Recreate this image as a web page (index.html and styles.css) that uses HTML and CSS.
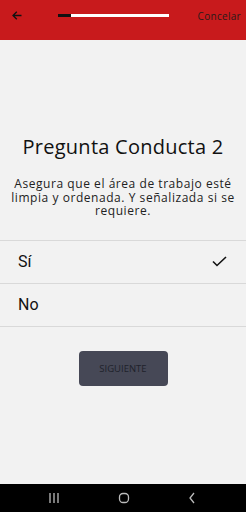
FILE: index.html
```html
<!DOCTYPE html>
<html>
<head>
<meta charset="utf-8">
<link rel="stylesheet" href="styles.css">
</head>
<body>
<div class="screen">
  <header class="topbar">
    <svg class="back" width="10" height="9" viewBox="0 0 10 9"><path d="M9.5 4.5H1M4.8 0.8L1 4.5l3.8 3.7" fill="none" stroke="#111" stroke-width="1.3"/></svg>
    <div class="progress"><div class="progress-fill"></div></div>
    <span class="cancel">Concelar</span>
  </header>
  <main class="content">
    <h1 class="title">Pregunta Conducta 2</h1>
    <p class="desc">Asegura que el área de trabajo esté limpia y ordenada. Y señalizada si se requiere.</p>
    <ul class="options">
      <li class="option"><span>Sí</span><svg width="15" height="11" viewBox="0 0 15 11"><path d="M1 5.5l4 4L14 1" fill="none" stroke="#111" stroke-width="1.6"/></svg></li>
      <li class="option"><span>No</span></li>
    </ul>
    <div class="actions"><button class="next">SIGUIENTE</button></div>
  </main>
  <nav class="navbar">
    <svg width="12" height="10" viewBox="0 0 12 10"><path d="M2 0v10M6 0v10M10 0v10" stroke="#bbb" stroke-width="1.3"/></svg>
    <svg width="12" height="12" viewBox="0 0 12 12"><rect x="1.5" y="1.5" width="9" height="9" rx="3.5" fill="none" stroke="#bbb" stroke-width="1.3"/></svg>
    <svg width="8" height="12" viewBox="0 0 8 12"><path d="M6 1L2 6l4 5" fill="none" stroke="#bbb" stroke-width="1.3"/></svg>
  </nav>
</div>
</body>
</html>
```
FILE: styles.css
```css
* { box-sizing: border-box; }
html, body { margin: 0; padding: 0; }
body { width: 246px; height: 512px; background: #f2f2f2; font-family: "Open Sans", "Lato", sans-serif; }
.screen { display: flex; flex-direction: column; height: 512px; }
.topbar { height: 40px; background: #c81a1c; display: flex; align-items: center; padding: 0 5px 9px 12px; }
.back { display: block; }
.progress { margin-left: 36px; width: 111px; height: 3px; background: #fff; }
.progress-fill { width: 13px; height: 3px; background: #111; }
.cancel { margin-left: auto; font-size: 10px; letter-spacing: 0.3px; color: #2a1a1a; }
.content { flex: 1; padding-top: 95px; }
.title { margin: 0; text-align: center; font-size: 20px; font-weight: 400; line-height: 24px; letter-spacing: 0.25px; color: #111; }
.desc { margin: 18px 5px 0; text-align: center; font-size: 12px; line-height: 13.5px; letter-spacing: 0.55px; color: #222; }
.options { list-style: none; margin: 22px 0 0; padding: 0; border-top: 1px solid #d9d9d9; }
.option { height: 43px; border-bottom: 1px solid #d9d9d9; display: flex; align-items: center; justify-content: space-between; padding: 0 19px 0 18px; font-family: "Roboto", sans-serif; font-size: 16px; color: #111; }
.actions { display: flex; justify-content: center; margin-top: 24px; }
.next { width: 89px; height: 35px; background: #464856; border: none; border-radius: 4px; font-family: "Open Sans", sans-serif; font-size: 9.5px; color: #20222b; }
.navbar { height: 28px; background: #000; display: flex; align-items: center; gap: 58px; padding: 0 0 0 48px; }
```
